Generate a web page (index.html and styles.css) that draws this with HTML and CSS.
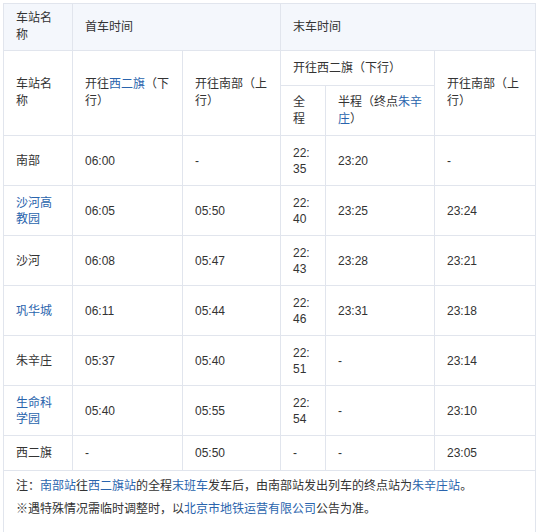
FILE: index.html
```html
<!DOCTYPE html>
<html lang="zh-CN">
<head>
<meta charset="utf-8">
<title>首末车时间</title>
<link rel="stylesheet" href="styles.css">
</head>
<body>
<div class="wrap">
<table class="timetable">
  <colgroup>
    <col class="c1"><col class="c2"><col class="c3"><col class="c4"><col class="c5"><col class="c6">
  </colgroup>
  <tr class="hd h1">
    <td>车站名称</td>
    <td colspan="2">首车时间</td>
    <td colspan="3">末车时间</td>
  </tr>
  <tr class="hd h2">
    <td rowspan="2">车站名称</td>
    <td rowspan="2">开往<a href="#">西二旗</a>（下行）</td>
    <td rowspan="2">开往南部（上行）</td>
    <td colspan="2">开往西二旗（下行）</td>
    <td rowspan="2">开往南部（上行）</td>
  </tr>
  <tr class="hd h3">
    <td>全程</td>
    <td>半程（终点<a href="#">朱辛庄</a>）</td>
  </tr>
  <tr class="row"><td>南部</td><td>06:00</td><td>-</td><td>22:35</td><td>23:20</td><td>-</td></tr>
  <tr class="row"><td><a href="#">沙河高教园</a></td><td>06:05</td><td>05:50</td><td>22:40</td><td>23:25</td><td>23:24</td></tr>
  <tr class="row"><td>沙河</td><td>06:08</td><td>05:47</td><td>22:43</td><td>23:28</td><td>23:21</td></tr>
  <tr class="row"><td><a href="#">巩华城</a></td><td>06:11</td><td>05:44</td><td>22:46</td><td>23:31</td><td>23:18</td></tr>
  <tr class="row"><td>朱辛庄</td><td>05:37</td><td>05:40</td><td>22:51</td><td>-</td><td>23:14</td></tr>
  <tr class="row"><td><a href="#">生命科学园</a></td><td>05:40</td><td>05:55</td><td>22:54</td><td>-</td><td>23:10</td></tr>
  <tr class="last"><td>西二旗</td><td>-</td><td>05:50</td><td>-</td><td>-</td><td>23:05</td></tr>
  <tr class="foot">
    <td colspan="6">
      <p>注：<a href="#">南部站</a>往<a href="#">西二旗站</a>的全程<a href="#">末班车</a>发车后，由南部站发出列车的终点站为<a href="#">朱辛庄站</a>。</p>
      <p>※遇特殊情况需临时调整时，以<a href="#">北京市地铁运营有限公司</a>公告为准。</p>
    </td>
  </tr>
</table>
</div>
</body>
</html>
```
FILE: styles.css
```css
html, body {
  margin: 0;
  padding: 0;
  background: #fff;
}
.wrap {
  padding: 3px;
}
.timetable {
  border-collapse: collapse;
  table-layout: fixed;
  width: 532px;
  font-family: "Liberation Sans", Arial, "Noto Sans CJK SC", sans-serif;
  font-size: 12px;
  line-height: 16px;
  color: #333;
}
.c1 { width: 69px; }
.c2 { width: 110px; }
.c3 { width: 98px; }
.c4 { width: 45px; }
.c5 { width: 109px; }
.c6 { width: 101px; }
.timetable td {
  border: 1px solid #e1e5ed;
  padding: 7px 11px 7px 12px;
  vertical-align: middle;
  text-align: left;
  word-break: break-all;
}
.timetable .hd td {
  line-height: 17px;
  padding-top: 6px;
  padding-bottom: 6px;
}
.timetable a {
  color: #2a64ad;
  text-decoration: none;
}
.h1 td {
  background: #f4f7fc;
}
.h1 { height: 47px; }
.h2 { height: 35px; }
.h3 { height: 50px; }
.row { height: 50px; }
.last { height: 35px; }
.foot td {
  height: 58px;
  padding: 4px 12px 8px;
  vertical-align: top;
}
.foot p {
  margin: 0;
  line-height: 23px;
}
```
